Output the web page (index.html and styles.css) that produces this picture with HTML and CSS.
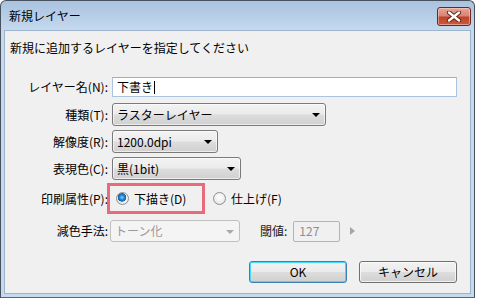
FILE: index.html
```html
<!DOCTYPE html>
<html lang="ja">
<head>
<meta charset="utf-8">
<title>新規レイヤー</title>
<link rel="stylesheet" href="styles.css">
</head>
<body>
<div class="window">
  <div class="titlebar">
    <span class="title">新規レイヤー</span>
    <div class="close">
      <svg width="16" height="11" viewBox="0 0 16 11">
        <path d="M3 1.5 L13 9.5 M13 1.5 L3 9.5" stroke="#5a1a14" stroke-width="4.2" stroke-linecap="round"/>
        <path d="M3 1.5 L13 9.5 M13 1.5 L3 9.5" stroke="#ffffff" stroke-width="2.4" stroke-linecap="round"/>
      </svg>
    </div>
  </div>
  <div class="client">
    <p class="prompt">新規に追加するレイヤーを指定してください</p>
    <div class="form">
      <div class="row row-name">
        <span class="lbl">レイヤー名(N):</span>
        <div class="textbox">下書き<span class="caret"></span></div>
      </div>
      <div class="row row-kind">
        <span class="lbl">種類(T):</span>
        <div class="combo combo-kind"><span>ラスターレイヤー</span><i class="arrow"></i></div>
      </div>
      <div class="row row-res">
        <span class="lbl">解像度(R):</span>
        <div class="combo combo-res"><span>1200.0dpi</span><i class="arrow"></i></div>
      </div>
      <div class="row row-color">
        <span class="lbl">表現色(C):</span>
        <div class="combo combo-color"><span>黒(1bit)</span><i class="arrow"></i></div>
      </div>
      <div class="row row-print">
        <span class="lbl">印刷属性(P):</span>
        <div class="highlight">
          <span class="radio checked"></span><span class="rtext">下描き(D)</span>
        </div>
        <span class="radio radio-2"></span><span class="rtext">仕上げ(F)</span>
      </div>
      <div class="row row-reduce">
        <span class="lbl">減色手法:</span>
        <div class="combo combo-reduce disabled"><span>トーン化</span><i class="arrow"></i></div>
        <span class="thr-lbl">閾値:</span>
        <div class="thr-box">127</div>
        <i class="thr-arrow"></i>
      </div>
    </div>
    <div class="buttons">
      <div class="btn btn-default">OK</div>
      <div class="btn">キャンセル</div>
    </div>
  </div>
</div>
</body>
</html>
```
FILE: styles.css
```css
html, body {
  margin: 0;
  padding: 0;
  background: #ffffff;
}
body {
  width: 480px;
  height: 299px;
  overflow: hidden;
  font-family: "Noto Sans CJK JP", "Noto Sans", sans-serif;
  font-size: 12px;
  line-height: 16px;
  color: #000;
}
.window {
  width: 475px;
  height: 298px;
  border: 1px solid #48525e;
  border-bottom-color: #1f7f9a;
  border-radius: 6px 6px 0 0;
  background: linear-gradient(#a9c2de 0px, #bcd2ea 20px, #c6daee 30px, #c6daee 100%);
  padding: 0 3px 3px 3px;
  box-sizing: border-box;
  display: flex;
  flex-direction: column;
}
.titlebar {
  height: 29px;
  display: flex;
  justify-content: space-between;
  align-items: flex-start;
  margin: 0 -1px 0 -1px;
}
.title {
  margin-top: 7px;
  margin-left: 6px;
  color: #000;
  font-size: 12px;
}
.close {
  margin-top: 6px;
  margin-right: 1px;
  width: 32px;
  height: 17px;
  border: 1px solid #6e2620;
  border-radius: 3px;
  background: linear-gradient(#e6a597 0%, #d98573 45%, #c0432e 55%, #c95a3e 100%);
  display: flex;
  align-items: center;
  justify-content: center;
  box-shadow: inset 0 0 0 1px rgba(255,220,210,0.5);
}
.client {
  flex: 1;
  background: #f0f0f0;
  border: 1px solid #9db4cc;
  padding: 0 13px 0 0;
  display: flex;
  flex-direction: column;
}
.prompt {
  margin: 9px 0 0 5px;
  padding: 0;
}
.form {
  margin-top: 21px;
  display: flex;
  flex-direction: column;
}
.row {
  display: flex;
  align-items: center;
  gap: 4px;
}
.lbl {
  width: 103px;
  text-align: right;
  white-space: nowrap;
}
.row-name { height: 20px; }
.row-kind { height: 23px; margin-top: 6px; }
.row-res { height: 23px; margin-top: 4px; }
.row-color { height: 23px; margin-top: 4px; }
.row-print { height: 31px; margin-top: 3px; gap: 0; }
.row-reduce { height: 22px; margin-top: 6px; gap: 0; }

.textbox {
  width: 345px;
  height: 20px;
  box-sizing: border-box;
  background: #fff;
  border: 1px solid #a9c4e0;
  border-top-color: #8fb0d4;
  padding-left: 4px;
  display: flex;
  align-items: center;
}
.caret {
  display: inline-block;
  width: 1px;
  height: 13px;
  background: #000;
  margin-left: 1px;
}
.combo {
  height: 23px;
  box-sizing: border-box;
  border: 1px solid #7a7a7a;
  border-radius: 3px;
  background: linear-gradient(#f3f3f3 0%, #ebebeb 48%, #dddddd 52%, #d0d0d0 100%);
  box-shadow: inset 0 0 0 1px rgba(255,255,255,0.6);
  display: flex;
  align-items: center;
  justify-content: space-between;
  padding: 0 5px 0 4px;
}
.combo-kind { width: 214px; }
.combo-res { width: 106px; }
.combo-color { width: 129px; }
.combo-reduce {
  width: 130px;
  height: 22px;
  margin-left: 2px;
}
.arrow {
  width: 0;
  height: 0;
  border-left: 4px solid transparent;
  border-right: 4px solid transparent;
  border-top: 4px solid #000;
  margin-top: 1px;
}
.combo.disabled {
  background: #f4f4f4;
  border-color: #c0c0c0;
  box-shadow: none;
  color: #9a9a9a;
}
.combo.disabled .arrow {
  border-top-color: #a8a8a8;
}
.highlight {
  margin-left: -1px;
  width: 98px;
  height: 31px;
  box-sizing: border-box;
  border: 3px solid #e76b7b;
  display: flex;
  align-items: center;
  padding-left: 6px;
}
.radio {
  width: 13px;
  height: 13px;
  box-sizing: border-box;
  border-radius: 50%;
  border: 1px solid #8c8f94;
  background: radial-gradient(circle at 50% 40%, #ffffff 0%, #f0f0f0 50%, #d8d8d8 100%);
  flex: none;
}
.radio.checked {
  background:
    radial-gradient(circle at 45% 40%, #9ad3ff 0px, #2b8ddd 2px, #0f5fa8 4px, rgba(0,0,0,0) 4.5px),
    radial-gradient(circle at 50% 40%, #ffffff 0%, #eeeeee 60%, #d4d4d4 100%);
}
.rtext {
  margin-left: 5px;
  white-space: nowrap;
}
.radio-2 {
  margin-left: 8px;
}
.thr-lbl {
  margin-left: 20px;
  color: #222;
}
.thr-box {
  margin-left: 6px;
  width: 47px;
  height: 21px;
  box-sizing: border-box;
  border: 1px solid #b4b4b4;
  border-radius: 2px;
  background: #f0f0f0;
  color: #8e8e8e;
  padding-left: 5px;
  display: flex;
  align-items: center;
}
.thr-arrow {
  margin-left: 10px;
  width: 0;
  height: 0;
  border-top: 4px solid transparent;
  border-bottom: 4px solid transparent;
  border-left: 5px solid #a6a6a6;
}
.buttons {
  margin-top: 19px;
  display: flex;
  justify-content: flex-end;
  gap: 12px;
}
.btn {
  width: 98px;
  height: 22px;
  box-sizing: border-box;
  border: 1px solid #707070;
  border-radius: 3px;
  background: linear-gradient(#f2f2f2 0%, #ebebeb 48%, #dddddd 52%, #cfcfcf 100%);
  box-shadow: inset 0 0 0 1px rgba(255,255,255,0.7);
  display: flex;
  align-items: center;
  justify-content: center;
}
.btn-default {
  border-color: #3c7fb1;
  box-shadow: inset 0 0 0 1px #48d8fb;
}
```
